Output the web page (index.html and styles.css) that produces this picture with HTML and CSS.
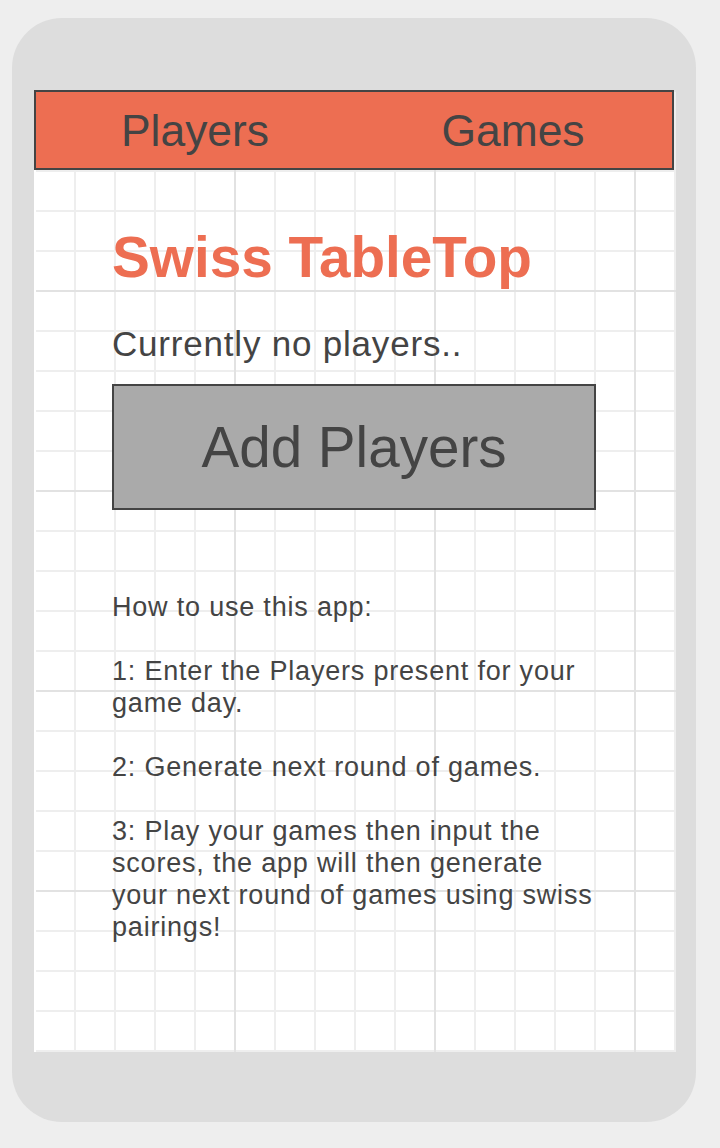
FILE: index.html
```html
<!DOCTYPE html>
<html lang="en">
<head>
<meta charset="utf-8">
<title>Swiss TableTop</title>
<link rel="stylesheet" href="styles.css">
</head>
<body>
<div class="phone">
  <div class="screen">
    <nav class="nav">
      <a class="nav-item">Players</a>
      <a class="nav-item">Games</a>
    </nav>
    <main class="content">
      <h1 class="title">Swiss TableTop</h1>
      <p class="status">Currently no players..</p>
      <button class="add-btn" type="button">Add Players</button>
      <section class="help">
        <p>How to use this app:</p>
        <p>1: Enter the Players present for your game day.</p>
        <p>2: Generate next round of games.</p>
        <p>3: Play your games then input the scores, the app will then generate your next round of games using swiss pairings!</p>
      </section>
    </main>
  </div>
</div>
</body>
</html>
```

FILE: styles.css
```css
html, body {
  margin: 0;
  padding: 0;
}

body {
  background: #eeeeee;
  font-family: "Liberation Sans", Arial, sans-serif;
  color: #444444;
}

.phone {
  box-sizing: border-box;
  margin: 18px 0 0 12px;
  width: 684px;
  height: 1104px;
  border-radius: 50px;
  background: #dddddd;
  padding: 72px 20px 70px 22px;
}

.screen {
  box-sizing: border-box;
  width: 642px;
  height: 962px;
  background-color: #ffffff;
  background-image:
    linear-gradient(#ffffff, #ffffff),
    linear-gradient(to right, #e2e2e2 2px, transparent 2px),
    linear-gradient(to bottom, #e2e2e2 2px, transparent 2px),
    linear-gradient(to right, #eeeeee 2px, transparent 2px),
    linear-gradient(to bottom, #eeeeee 2px, transparent 2px);
  background-size:
    2px 100%,
    200px 200px,
    200px 200px,
    40px 40px,
    40px 40px;
  background-repeat: no-repeat, repeat, repeat, repeat, repeat;
  background-position: 0 0, 0 0, 0 0, 0 0, 0 0;
}

.nav {
  box-sizing: border-box;
  width: 640px;
  height: 80px;
  display: flex;
  background: #ed6e52;
  border: 2px solid #444444;
}

.nav-item {
  flex: 1;
  display: flex;
  align-items: center;
  justify-content: center;
  padding-top: 2px;
  font-size: 44.4px;
  color: #444444;
  text-decoration: none;
}

.content {
  padding-left: 78px;
  width: 484px;
}

.title {
  margin: 56px 0 0 0;
  font-size: 56.7px;
  line-height: 64px;
  font-weight: bold;
  color: #ed6e52;
}

.status {
  margin: 34px 0 0 0;
  font-size: 35px;
  line-height: 40px;
  letter-spacing: 0.8px;
}

.add-btn {
  box-sizing: border-box;
  display: flex;
  align-items: center;
  justify-content: center;
  margin: 20px 0 0 0;
  width: 484px;
  height: 126px;
  padding: 0;
  background: #aaaaaa;
  border: 2px solid #444444;
  border-radius: 0;
  font-family: "Liberation Sans", Arial, sans-serif;
  font-size: 56.6px;
  color: #444444;
}

.help {
  margin-top: 81px;
  font-size: 27px;
  line-height: 32px;
  letter-spacing: 0.8px;
}

.help p {
  margin: 0 0 32px 0;
}
```
